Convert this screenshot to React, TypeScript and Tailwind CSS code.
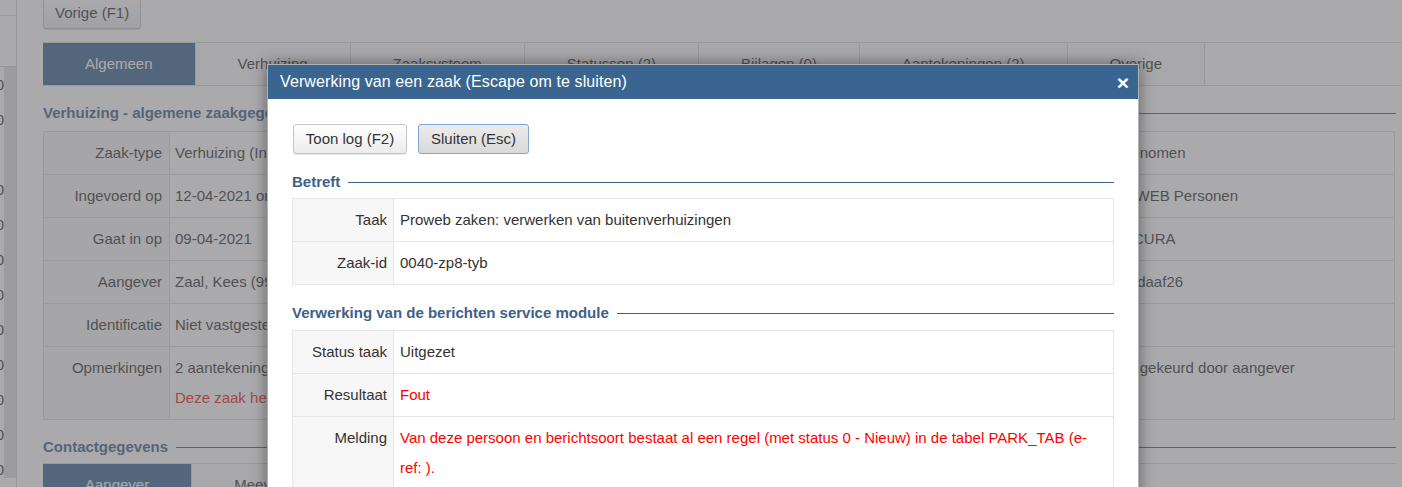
import React from "react";

type BgRow = {
  label: string;
  value: React.ReactNode;
  label2: string;
  value2: string;
};

const bgRows: BgRow[] = [
  { label: "Zaak-type", value: "Verhuizing (Inkomend)", label2: "Status", value2: "Opgenomen" },
  { label: "Ingevoerd op", value: "12-04-2021 om 10:15", label2: "Bron", value2: "PROWEB Personen" },
  { label: "Gaat in op", value: "09-04-2021", label2: "Zaaksysteem", value2: "Key CURA" },
  { label: "Aangever", value: "Zaal, Kees (999993653)", label2: "Ingevoerd", value2: "door daaf26" },
  { label: "Identificatie", value: "Niet vastgesteld", label2: "Kenmerk", value2: "" },
  {
    label: "Opmerkingen",
    value: (
      <>
        <div>2 aantekeningen</div>
        <div className="text-[#e8191c]">Deze zaak heeft een foutmelding</div>
      </>
    ),
    label2: "Toestemming",
    value2: "Goedgekeurd door aangever",
  },
];

const mainTabs = [
  "Algemeen",
  "Verhuizing",
  "Zaaksysteem",
  "Statussen (2)",
  "Bijlagen (0)",
  "Aantekeningen (2)",
  "Overige",
];

const subTabs = ["Aangever", "Meeverhuizers", "Nieuw adres", "Oud adres"];

function Heading({ title, className }: { title: string; className?: string }) {
  return (
    <div className={`flex items-center gap-[8px] ${className ?? ""}`}>
      <span className="whitespace-nowrap text-[15px] font-bold leading-[18px] text-[#3e6189]">{title}</span>
      <div className="h-px flex-1 bg-[#3e6189]" />
    </div>
  );
}

function ModalRow({
  label,
  children,
  first,
  valueClass,
}: {
  label: string;
  children: React.ReactNode;
  first?: boolean;
  valueClass?: string;
}) {
  return (
    <div className={`flex ${first ? "" : "border-t border-[#e6e6e6]"}`}>
      <div className="w-[101px] shrink-0 border-r border-[#e6e6e6] bg-[#f7f7f7] py-[6px] pr-[6px] text-right leading-[30px] text-[#333]">
        {label}
      </div>
      <div className={`min-w-0 flex-1 py-[6px] pl-[6px] leading-[30px] ${valueClass ?? "text-[#333]"}`}>{children}</div>
    </div>
  );
}

export default function App() {
  return (
    <div className="relative h-[487px] w-[1402px] overflow-hidden bg-white font-['Liberation_Sans',Arial,sans-serif] text-[15px] text-[#333]">
      {/* Background page */}
      <div className="flex h-full">
        {/* Sidebar */}
        <div className="flex w-[17px] shrink-0 flex-col border-r border-[#d4d4d4]">
          <div className="h-[16px] border-b border-[#d4d4d4]" />
          <div className="h-[52px] border-b border-[#d4d4d4]" />
          <div className="flex">
            <div className="flex w-[4px] flex-col overflow-hidden">
              {["10", "20", "", "40", "50", "60", "70", "80", "90", "10", "10", "20"].map((n, i) => (
                <div key={i} className="flex h-[35px] items-center justify-end whitespace-nowrap leading-none">
                  {n}
                </div>
              ))}
            </div>
            <div className="h-[411px] w-[12px] bg-[#e0e0e0]" />
          </div>
        </div>

        {/* Main */}
        <div className="min-w-0 flex-1 pl-[26px] pr-[6px]">
          <button className="mt-[-2px] h-[31px] rounded-[3px] border border-[#c4c4c4] bg-gradient-to-b from-white to-[#ebebeb] px-[11px] text-[15px] text-[#333] shadow-[0_1px_1px_rgba(0,0,0,0.12)]">
            Vorige (F1)
          </button>

          <div className="mr-[-6px] mt-[13px] flex h-[44px] border-y border-[#d8d8d8]">
            {mainTabs.map((t, i) => (
              <div
                key={t}
                className={`flex items-center whitespace-nowrap border-r border-[#d8d8d8] px-[42px] ${
                  i === 0 ? "bg-[#3a6590] text-white" : "bg-[#fafafa] text-[#333]"
                }`}
              >
                {t}
              </div>
            ))}
          </div>

          <Heading title="Verhuizing - algemene zaakgegevens" className="mb-[9px] mt-[18px]" />

          <div className="mr-[1px] border border-[#dcdcdc]">
            {bgRows.map((r, i) => (
              <div key={r.label} className={`flex ${i > 0 ? "border-t border-[#dcdcdc]" : ""}`}>
                <div className="w-[126px] shrink-0 border-r border-[#dcdcdc] bg-[#f5f5f5] py-[6px] pr-[7px] text-right leading-[30px]">
                  {r.label}
                </div>
                <div className="min-w-0 flex-1 py-[6px] pl-[5px] leading-[30px]">{r.value}</div>
                <div className="w-[126px] shrink-0 border-l border-[#dcdcdc] bg-[#f5f5f5] py-[6px] pr-[7px] text-right leading-[30px]">
                  {r.label2}
                </div>
                <div className="w-[297px] shrink-0 border-l border-[#dcdcdc] py-[6px] pl-[5px] leading-[30px]">
                  {r.value2}
                </div>
              </div>
            ))}
          </div>

          <Heading title="Contactgegevens" className="mb-[7px] mt-[18px]" />

          <div className="flex h-[44px] border-y border-[#d8d8d8]">
            {subTabs.map((t, i) => (
              <div
                key={t}
                className={`flex items-center whitespace-nowrap border-r border-[#d8d8d8] px-[42px] ${
                  i === 0 ? "bg-[#3a6590] text-white" : "bg-[#fafafa] text-[#333]"
                }`}
              >
                {t}
              </div>
            ))}
          </div>
        </div>
      </div>

      {/* Overlay */}
      <div className="absolute inset-0 bg-[rgba(103,104,107,0.56)]" />

      {/* Modal */}
      <div className="absolute left-[267px] top-[64px] h-[440px] w-[872px] border border-[rgba(0,0,0,0.3)] bg-white shadow-[0_0_14px_rgba(0,0,0,0.45)]">
        <div className="flex h-[34px] items-center justify-between bg-[#3a6590] pl-[12px] pr-[9px] text-white">
          <span className="text-[16px] tracking-[0.1px]">Verwerking van een zaak (Escape om te sluiten)</span>
          <span className="text-[21px] font-bold leading-none">×</span>
        </div>
        <div className="pl-[24px] pr-[24px] pt-[25px]">
          <div className="flex gap-[11px] pl-[1px]">
            <button className="h-[30px] w-[114px] rounded-[3px] border border-[#c6c6c6] bg-gradient-to-b from-white to-[#ececec] text-[15px] text-[#333] shadow-[0_1px_1px_rgba(0,0,0,0.1)]">
              Toon log (F2)
            </button>
            <button className="h-[30px] w-[111px] rounded-[3px] border border-[#7fa6d0] bg-gradient-to-b from-[#ececec] to-[#d9d9d9] text-[15px] text-[#333]">
              Sluiten (Esc)
            </button>
          </div>

          <Heading title="Betreft" className="mb-[7px] mt-[19px]" />
          <div className="border border-[#e6e6e6]">
            <ModalRow label="Taak" first>
              Proweb zaken: verwerken van buitenverhuizingen
            </ModalRow>
            <ModalRow label="Zaak-id">0040-zp8-tyb</ModalRow>
          </div>

          <Heading title="Verwerking van de berichten service module" className="mb-[8px] mt-[19px]" />
          <div className="border border-[#e6e6e6]">
            <ModalRow label="Status taak" first>
              Uitgezet
            </ModalRow>
            <ModalRow label="Resultaat" valueClass="text-[#ff0000]">
              Fout
            </ModalRow>
            <ModalRow label="Melding" valueClass="text-[#ff0000] pr-[10px]">
              Van deze persoon en berichtsoort bestaat al een regel (met status 0 - Nieuw) in de tabel PARK_TAB (e-ref: ).
            </ModalRow>
          </div>
        </div>
      </div>
    </div>
  );
}
